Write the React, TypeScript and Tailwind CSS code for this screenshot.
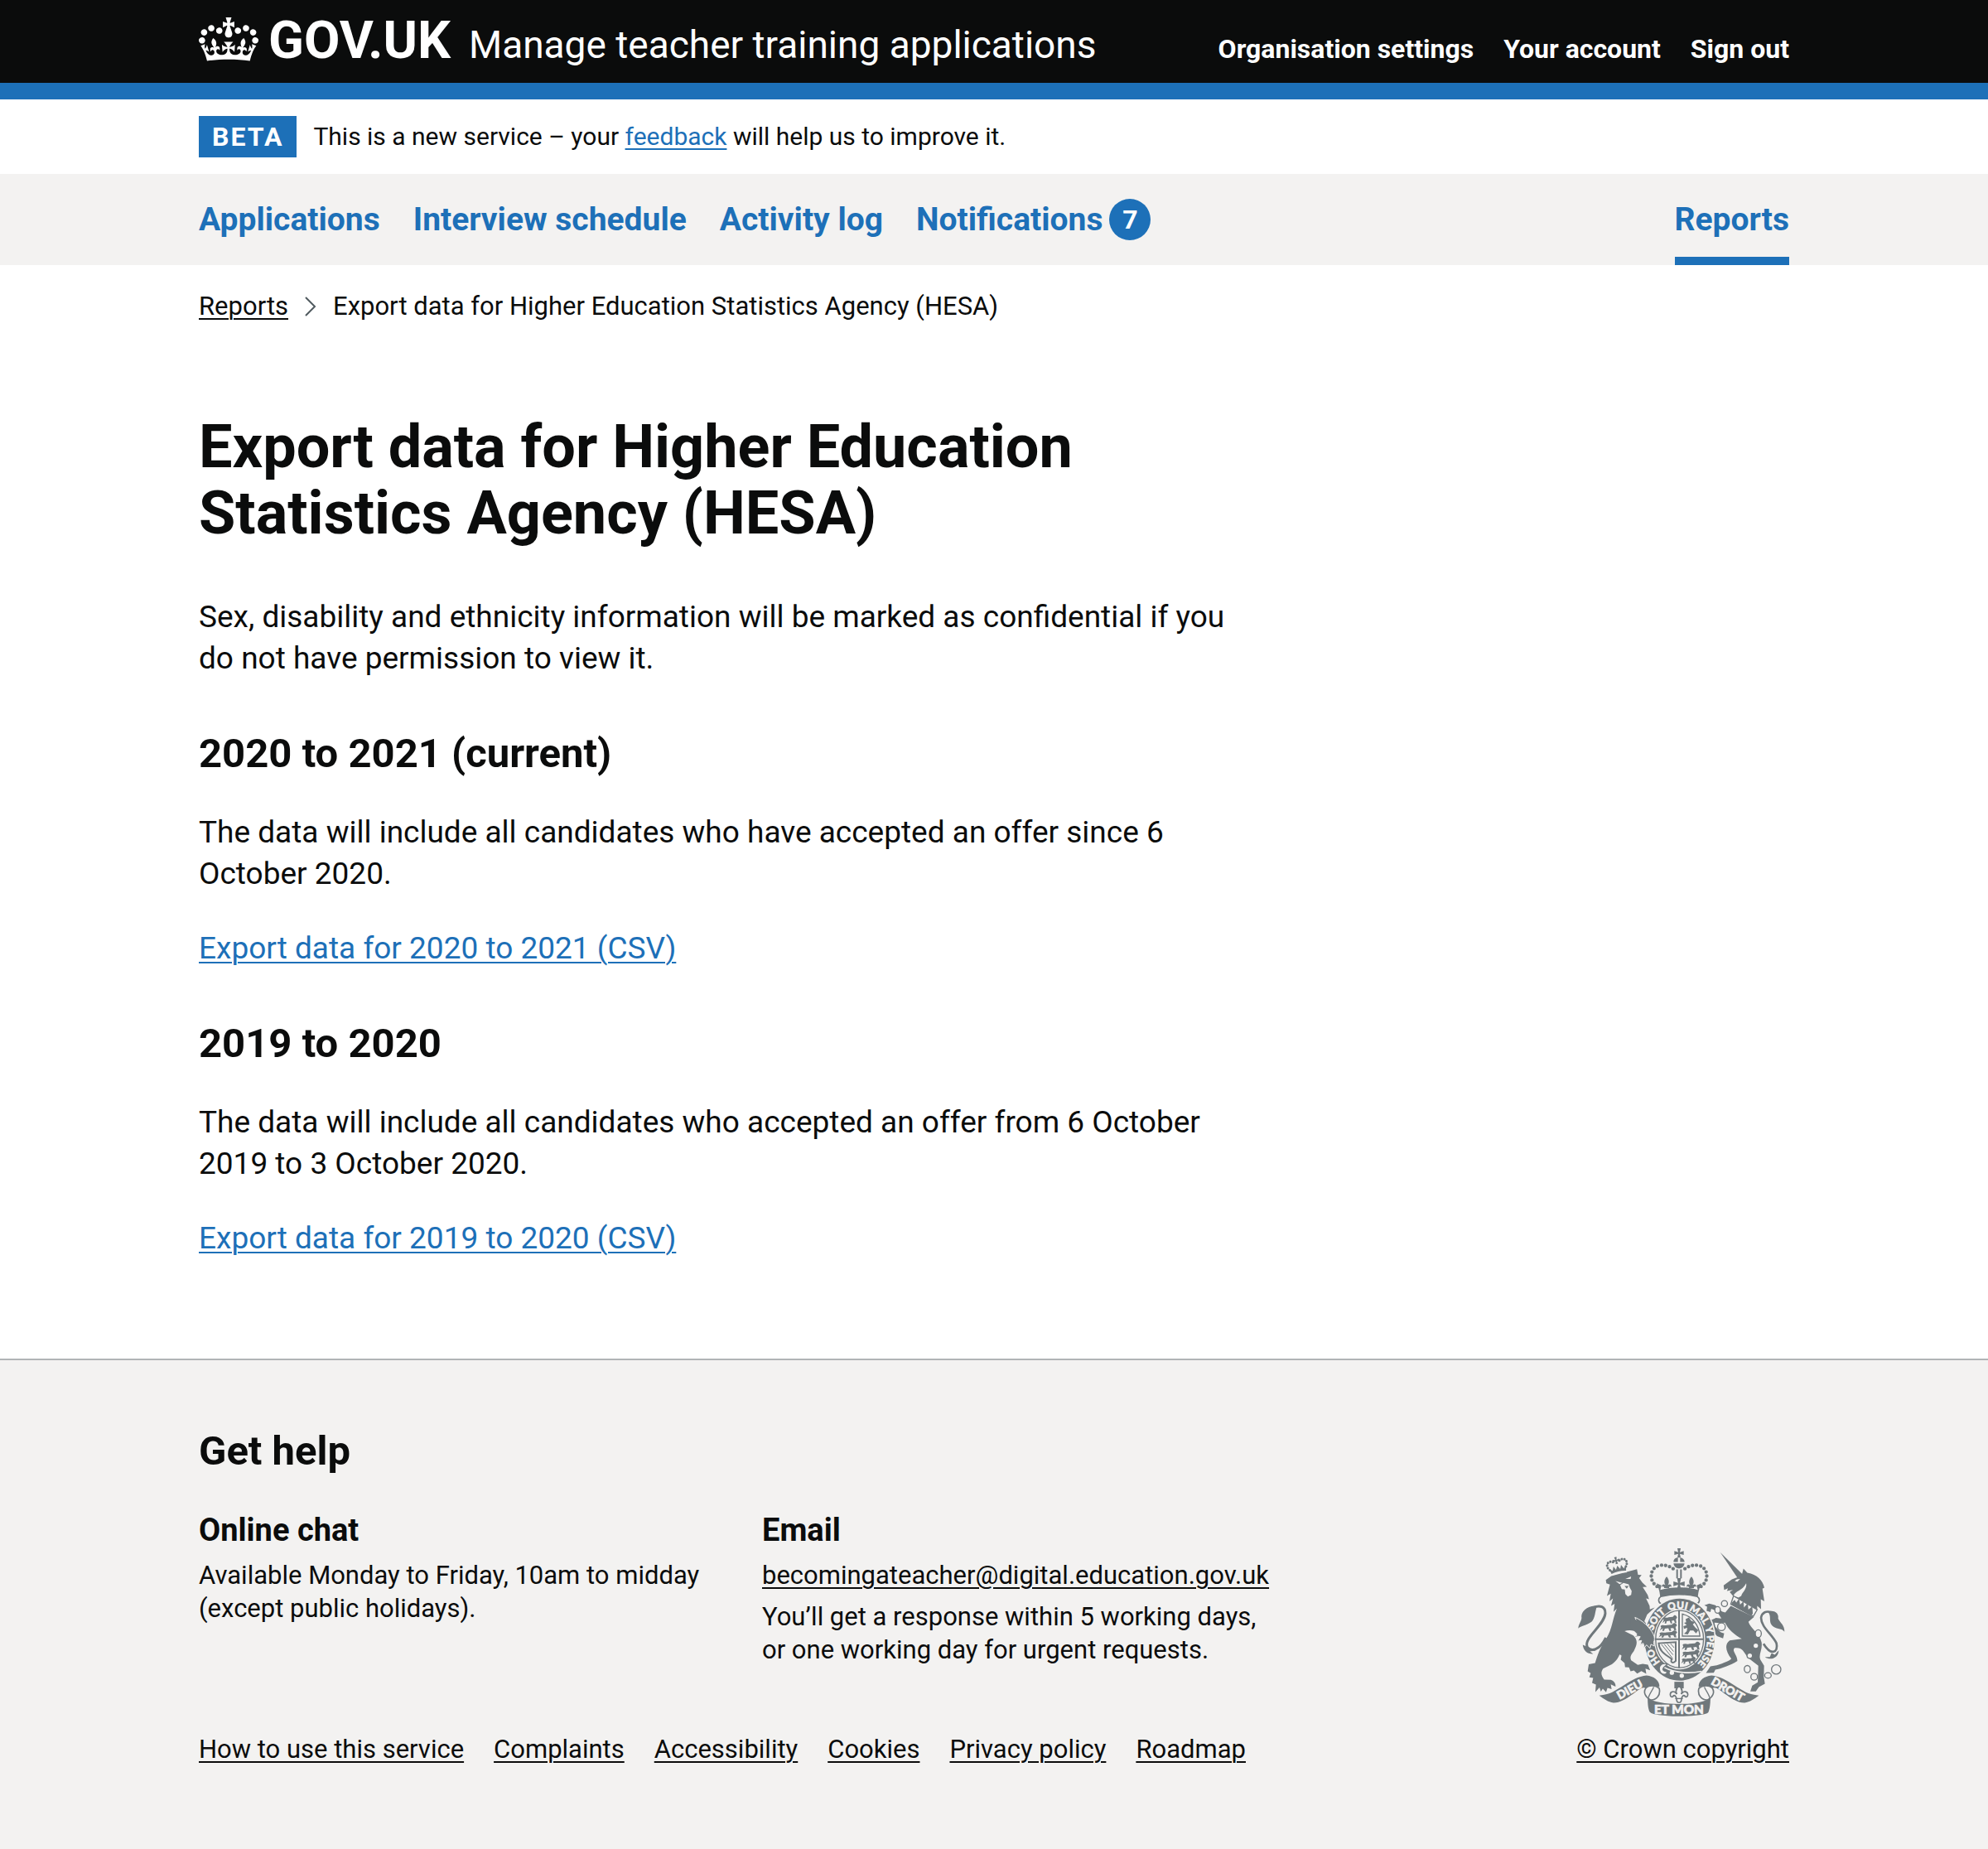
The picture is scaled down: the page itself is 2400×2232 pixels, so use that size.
import React from "react";

const INK = "#6f777b";
const PAPER = "#f3f2f1";

function Crown() {
  return (
    <svg aria-hidden="true" viewBox="0 0 132 97" className="h-[53px] w-[72px] shrink-0" fill="currentColor">
      <path
        fillRule="evenodd"
        d="M25 30.2c3.5 1.5 7.7-.2 9.1-3.7 1.5-3.6-.2-7.8-3.9-9.2-3.6-1.4-7.6.3-9.1 3.9-1.4 3.5.3 7.5 3.9 9zM9 39.5c3.6 1.5 7.8-.2 9.2-3.7 1.5-3.6-.2-7.8-3.9-9.1-3.6-1.5-7.6.2-9.1 3.8-1.4 3.5.3 7.5 3.8 9zM4.4 57.2c3.5 1.5 7.7-.2 9.1-3.8 1.5-3.6-.2-7.7-3.9-9.1-3.5-1.5-7.6.3-9.1 3.8-1.4 3.5.3 7.6 3.9 9.1zm38.3-21.4c3.5 1.5 7.7-.2 9.1-3.8 1.5-3.6-.2-7.7-3.9-9.1-3.6-1.5-7.6.3-9.1 3.8-1.3 3.6.4 7.7 3.9 9.1zm64.4-5.6c-3.6 1.5-7.8-.2-9.1-3.7-1.5-3.6.2-7.8 3.8-9.2 3.6-1.4 7.7.3 9.2 3.9 1.3 3.5-.4 7.5-3.9 9zm15.9 9.3c-3.6 1.5-7.7-.2-9.1-3.7-1.5-3.6.2-7.8 3.7-9.1 3.6-1.5 7.7.2 9.2 3.8 1.5 3.5-.3 7.5-3.8 9zm4.7 17.7c-3.6 1.5-7.8-.2-9.2-3.8-1.5-3.6.2-7.7 3.9-9.1 3.6-1.5 7.7.3 9.2 3.8 1.3 3.5-.4 7.6-3.9 9.1zM89.3 35.8c-3.6 1.5-7.8-.2-9.2-3.8-1.4-3.6.2-7.7 3.9-9.1 3.6-1.5 7.7.3 9.2 3.8 1.4 3.6-.3 7.7-3.9 9.1zM69.7 17.7l8.9 4.7V9.3l-8.9 2.8c-.2-.3-.5-.6-.9-.9L72.4 0H59.6l3.5 11.2c-.3.3-.6.5-.9.9l-8.8-2.8v13.1l8.8-4.7c.3.3.6.7.9.9l-5 15.4v.1c-.2.8-.4 1.6-.4 2.4 0 4.1 3.1 7.5 7 8.1h.2c.3 0 .7.1 1 .1.4 0 .7 0 1-.1h.2c4-.6 7.1-4.1 7.1-8.1 0-.8-.1-1.7-.4-2.4V34l-5.1-15.4c.4-.2.7-.6 1-.9zM66 92.8c16.9 0 32.8 1.1 47.1 3.2 4-16.9 8.9-26.7 14-33.5l-9.6-3.4c1 4.9 1.1 7.2 0 10.2-1.5-1.4-3-4.3-4.2-8.7L108.6 76c2.8-2 5-3.2 7.5-3.3-4.4 9.4-10 11.9-13.6 11.2-4.3-.8-6.3-4.6-5.6-7.9 1-4.7 5.7-5.9 8-.5 4.3-8.7-3-11.4-7.6-8.8 7.1-7.2 7.9-13.5 2.1-21.1-8 6.1-8.1 12.3-4.5 20.8-4.7-5.4-12.1-2.5-9.5 6.2 3.4-5.2 7.9-2 7.2 3.1-.6 4.3-6.4 7.8-13.5 7.2-10.3-.9-10.9-8-11.2-13.8 2.5-.5 7.1 1.8 11 7.3L80.2 60c-4.1 4.4-8 5.3-12.3 5.4 1.4-4.4 8-11.6 8-11.6H55.5s6.4 7.2 7.9 11.6c-4.2-.1-8-1-12.3-5.4l1.4 16.4c3.9-5.5 8.5-7.7 10.9-7.3-.3 5.8-.9 12.8-11.1 13.8-7.2.6-12.9-2.9-13.5-7.2-.7-5 3.8-8.3 7.1-3.1 2.7-8.7-4.6-11.6-9.4-6.2 3.7-8.5 3.6-14.7-4.6-20.8-5.8 7.6-5 13.9 2.2 21.1-4.7-2.6-11.9.1-7.7 8.8 2.3-5.5 7.1-4.2 8.1.5.7 3.3-1.3 7.1-5.7 7.9-3.5.7-9-1.8-13.5-11.2 2.5.1 4.7 1.3 7.5 3.3l-4.7-15.4c-1.2 4.4-2.7 7.2-4.3 8.7-1.1-3-.9-5.3 0-10.2l-9.5 3.4c5 6.9 9.9 16.7 14 33.5 14.8-2.1 30.8-3.2 47.7-3.2z"
      />
    </svg>
  );
}

const CROSS = "M-6 -17H6L3 -3L17 -7V7L3 3L6 17H-6L-3 3L-17 7V-7L-3 -3Z";
const FLEUR = "M0 -20C9 -10 9 0 4 8C10 2 18 6 15 14C11 10 8 14 8 18H-8C-8 14 -11 10 -15 14C-18 6 -10 2 -4 8C-9 0 -9 -10 0 -20Z";
const PASSANT = "M0 12L4 4L2 0C8 -6 14 0 20 -3L34 -4C40 -12 46 -8 48 -2L44 2L46 12H41L38 5L30 6L32 13H27L24 6L14 7L12 13H7L9 6Z";

function Crest() {
  return (
    <svg aria-hidden="true" viewBox="66 50 762 620" className="h-[206px] w-[254px]" fill={INK}>
      {/* lion */}
      <path d="M172 168L192 154L285 129L289 149L302 150L293 161L305 178L321 193L306 194L324 222L329 238L318 235L331 262L332 275L350 268L322 294L312 318L344 362L352 392L340 409L330 402L328 415L316 407L310 414L309 400L298 404L303 388L288 391L297 374L279 374L290 362C275 350 255 349 240 354L272 370C292 390 283 408 274 426C264 440 258 447 264 460L288 477L306 473L325 476L333 496L316 490L319 509L301 499L286 508L274 497L262 500L256 486L242 485L240 470L226 458L229 443L219 437L228 405C228 440 212 462 194 474L162 490C152 505 156 516 166 530L190 531C202 535 209 545 207 556L190 547L193 565L178 560L173 576L161 563L154 574L149 559L134 575L136 548L122 542L126 524L112 522L117 507L106 500L110 474L133 470C142 440 150 415 174 380C196 345 196 310 212 272L200 284L204 255L191 262L198 235L185 246L190 218L176 226L187 185L174 180Z" />
      <path d="M207 172L232 179L222 183ZM243 164L264 155L262 164Z" fill={PAPER} />
      <path d="M224 187L236 179L255 184L259 196L266 208L264 222L252 228L243 219L241 203L230 201Z" fill={PAPER} />
      <path d="M240 190L255 190L248 200Z" />
      <path d="M172 378C150 425 118 430 105 412C88 380 165 335 170 290C171 265 150 258 128 268" fill="none" stroke={INK} strokeWidth="9" />
      <path d="M140 262C112 260 80 278 84 306C82 322 72 330 72 344C82 334 100 334 120 320C134 306 132 284 140 262ZM88 404C92 428 105 438 126 437L114 428L136 425Z" />
      {/* lion's crown */}
      <g transform="translate(214 118) rotate(-13)">
        <path d="M-30 8C-48 -14 -24 -32 -7 -14M30 8C48 -14 24 -32 7 -14" fill="none" stroke={INK} strokeWidth="9" strokeLinecap="round" strokeDasharray="0 10" />
        <path d="M-32 2L-27 23Q0 16 27 23L32 2L21 13L14 -2L8 12L0 -2L-8 12L-14 -2L-21 13Z" />
        <path d="M-28 28Q0 21 28 28" fill="none" stroke={PAPER} strokeWidth="4" />
        <path d={CROSS} transform="translate(0 -21) scale(.75)" />
      </g>
      {/* royal crown */}
      <path d={CROSS} transform="translate(438 70)" />
      <path d="M418 103C418 92 426 87 434 87V103ZM442 87C452 88 458 94 458 103H442ZM418 108H458C456 120 448 126 438 126C428 126 420 120 418 108Z" />
      <path d="M428 130H434V162H428ZM442 130H448V162H442Z" />
      <path d="M358 192C326 170 332 122 368 115C398 112 414 124 424 134M518 192C550 170 544 122 508 115C478 112 462 124 452 134" fill="none" stroke={INK} strokeWidth="13" strokeLinecap="round" strokeDasharray="0 15" />
      <path d="M356 180L374 188L370 204C410 192 466 192 506 204L502 188L520 180C510 200 508 215 506 232C460 222 416 222 370 232C368 215 366 200 356 180Z" />
      <path d={FLEUR} transform="translate(393 178) scale(1.1)" />
      <path d={FLEUR} transform="translate(483 178) scale(1.1)" />
      <path d={CROSS} transform="translate(438 182) scale(1.2)" />
      <path d="M372 228C416 218 460 218 504 228C516 236 514 252 500 256C456 244 420 244 376 256C362 252 360 236 372 228Z" fill={PAPER} stroke={INK} strokeWidth="5" />
      {/* unicorn */}
      <path d="M588 68L669 148L650 160Z" />
      <path d="M650 158L667 146L672 127L686 142C722 148 742 170 748 196L741 200L748 246L735 238L736 274L722 262L722 275L634 226L622 212L634 204L612 208L616 198L602 204L600 188L630 166Z" />
      <path d="M636 226C642 206 668 208 682 180C686 200 668 212 664 226L654 232ZM648 166L660 164L650 174L640 172Z" fill={PAPER} />
      <path d="M636 226L722 276L708 300L626 256Z" fill={PAPER} stroke={INK} strokeWidth="4" />
      <path d="M630 250L640 240L646 250L656 236L660 258L672 246L674 268L688 252L690 276L704 264L706 290L700 298L628 258Z" />
      <path d="M626 262L710 303L690 320C698 345 730 360 738 395C742 425 724 440 735 460L747 480L746 520L750 545L728 557L717 573L697 573L704 552L724 540L726 480L688 450C670 425 668 412 640 415C628 425 650 440 650 462C626 478 590 490 570 494L564 505L536 506L552 482L575 478C600 470 625 460 628 454C608 430 602 402 622 388L666 382C640 368 618 350 604 322L580 325L566 322L570 338L588 358L602 362L598 380L576 372L553 345L548 318L572 306L592 308L582 292L568 278L555 273L552 285L538 280L540 265L530 260L548 254L570 260L590 282L606 286Z" />
      <path d="M612 298L592 290L568 267L542 262M606 318L580 316L558 318L562 340L588 366" fill="none" stroke={INK} strokeWidth="12" strokeLinejoin="round" />
      <path d="M745 400C772 445 800 432 792 398C776 365 736 340 736 305C740 285 756 280 772 285" fill="none" stroke={INK} strokeWidth="8" />
      <path d="M760 284C786 274 802 292 798 308C806 325 822 332 821 356C808 342 790 348 776 334C762 318 776 298 760 284ZM750 448C770 462 800 452 800 424L786 440L774 434L768 448Z" />
      <g fill={PAPER} stroke={INK} strokeWidth="4">
        <circle cx="603" cy="254" r="11" />
        <ellipse cx="578" cy="277" rx="10" ry="12" />
        <circle cx="592" cy="338" r="14" />
        <ellipse cx="726" cy="363" rx="11" ry="14" />
        <circle cx="717" cy="407" r="10" />
        <circle cx="695" cy="443" r="10" />
        <ellipse cx="686" cy="492" rx="11" ry="13" />
        <circle cx="711" cy="520" r="12" />
        <ellipse cx="761" cy="515" rx="12" ry="10" />
        <circle cx="791" cy="493" r="17" />
      </g>
      {/* garter */}
      <ellipse cx="440" cy="385" rx="132" ry="154" fill={PAPER} />
      <ellipse cx="440" cy="385" rx="127" ry="149" />
      <ellipse cx="440" cy="383" rx="93" ry="110" fill={PAPER} />
      <ellipse cx="440" cy="383" rx="87" ry="104" fill="none" stroke={INK} strokeWidth="4" />
      <path id="garter-line" d="M440 498A100 113 0 0 1 440 272A100 113 0 0 1 440 498" fill="none" />
      <g fill={PAPER} stroke={PAPER} strokeWidth="1.5" fontFamily="Lato, sans-serif" fontWeight="900" fontSize="36" textAnchor="middle">
        <text><textPath href="#garter-line" startOffset="16%">HO</textPath></text>
        <text><textPath href="#garter-line" startOffset="36%">SOIT</textPath></text>
        <text><textPath href="#garter-line" startOffset="49%">QUI</textPath></text>
        <text><textPath href="#garter-line" startOffset="61%">MAL</textPath></text>
        <text><textPath href="#garter-line" startOffset="70%">Y</textPath></text>
        <text><textPath href="#garter-line" startOffset="81%">PENSE</textPath></text>
      </g>
      <path d="M372 478C400 500 460 512 520 500" fill="none" stroke={PAPER} strokeWidth="5" />
      <path d="M396 474C372 466 358 486 372 506C384 516 396 510 394 500C382 502 376 494 382 486Z" fill={PAPER} stroke={INK} strokeWidth="4" />
      <circle cx="412" cy="505" r="8" fill={PAPER} />
      <circle cx="448" cy="516" r="8" fill={PAPER} />
      {/* lion's forepaw resting on the garter */}
      <path d="M278 304C306 316 330 338 344 364C350 376 350 386 346 394L348 408L336 402L332 416L320 404L312 414L308 398L297 402L302 388L288 390L297 374L282 372L290 340Z" stroke={PAPER} strokeWidth="3" />
      <path d="M262 300L300 326L300 366L284 362L262 340Z" />
      {/* quartered shield */}
      <path d="M435 278H441V380H528V386H441V488H435V386H350V380H435Z" />
      <path d={PASSANT} transform="translate(378 308) scale(1.1 1.4)" />
      <path d={PASSANT} transform="translate(368 336) scale(1.3 1.3)" />
      <path d={PASSANT} transform="translate(364 362) scale(1.4 1.2)" />
      <path d={PASSANT} transform="translate(448 404) scale(1.4 1.4)" />
      <path d={PASSANT} transform="translate(448 432) scale(1.35 1.3)" />
      <path d={PASSANT} transform="translate(446 457) scale(1.1 1.2)" />
      <path d="M450 292C485 300 510 330 514 372H450Z" fill="none" stroke={INK} strokeWidth="4" />
      <path d="M462 310L474 304L482 316L496 322L488 330L498 342L508 350L500 362L490 352L478 352L470 366L456 364L466 354L468 342L456 346L454 336L466 332L456 324L464 322Z" />
      <path d="M364 398L426 394V462C416 474 404 466 412 456C392 440 366 430 364 398Z" fill="none" stroke={INK} strokeWidth="6" />
      <path d="M374 402L414 452M384 401L416 440M395 400L418 428M407 399L420 414" fill="none" stroke={INK} strokeWidth="3" />
      {/* pendant */}
      <path d="M421 538H455V562H421Z" />
      <path d="M438 553C451 563 451 573 446 583C454 569 470 572 470 585C470 594 460 596 458 588C452 586 448 594 447 600C447 618 429 618 429 600C428 594 424 586 418 588C416 596 406 594 406 585C406 572 422 569 430 583C425 573 425 563 438 553Z" fill={PAPER} stroke={INK} strokeWidth="5" />
      <path d="M424 599H452" stroke={INK} strokeWidth="4" />
      {/* motto scroll */}
      <path d="M148 588L166 585C215 578 262 520 320 515C352 518 370 540 366 558C350 550 330 552 316 562C300 545 250 615 200 614C180 612 165 600 148 588Z" />
      <path d="M728 588L710 585C661 578 614 520 556 515C524 518 506 540 510 558C526 550 546 552 560 562C576 545 626 615 676 614C696 612 711 600 728 588Z" />
      <path d="M318 560C306 576 316 594 334 604C356 606 372 586 366 562C352 550 330 550 318 560ZM558 560C570 576 560 594 542 604C520 606 504 586 510 562C524 550 546 550 558 560Z" fill={PAPER} stroke={INK} strokeWidth="5" />
      <path d="M346 557C340 572 328 584 326 600M530 557C536 572 548 584 550 600" fill="none" stroke={INK} strokeWidth="4" />
      <path d="M324 596C360 626 516 626 552 596C552 620 549 640 544 650C526 668 350 668 332 648C326 638 324 620 324 596Z" />
      <g fill={PAPER} stroke={PAPER} strokeWidth="2" fontFamily="Lato, sans-serif" fontWeight="900" fontSize="42" textAnchor="middle">
        <text transform="translate(266 579) rotate(-29)">DIEU</text>
        <text transform="translate(608 578) rotate(30)">DROIT</text>
        <text x="438" y="655" fontSize="46">ET MON</text>
      </g>
    </svg>
  );
}

const headerLinks = ["Organisation settings", "Your account", "Sign out"];
const footerLinks = ["How to use this service", "Complaints", "Accessibility", "Cookies", "Privacy policy", "Roadmap"];
const container = "mx-auto w-full max-w-[1920px]";
const underlined = "underline decoration-2 underline-offset-4";

function ExportSection({ title, text, link }: { title: string; text: string; link: string }) {
  return (
    <section className="mt-[60px]">
      <h2 className="mb-10 text-[49px] leading-[60px] font-bold">{title}</h2>
      <p className="mb-10">{text}</p>
      <p>
        <a href="#" className={`${underlined} text-[#1d70b8]`}>{link}</a>
      </p>
    </section>
  );
}

export default function App() {
  return (
    <div className="flex min-h-screen flex-col bg-white font-[Roboto,sans-serif] text-[31px] leading-10 text-[#0b0c0c]">
      <header className="bg-[#0b0c0c] text-white">
        <div className={`${container} flex h-[100px] items-baseline justify-between pt-[14px]`}>
          <div className="flex items-baseline">
            <a href="#" className="flex items-baseline gap-3 text-[63px] leading-[70px] font-bold">
              <span className="self-start pt-[7px]"><Crown /></span>
              GOV.UK
            </a>
            <a href="#" className="ml-[22px] text-[46px] leading-[50px]">Manage teacher training applications</a>
          </div>
          <nav aria-label="Account">
            <ul className="flex gap-9 text-[32px] font-bold">
              {headerLinks.map((l) => (
                <li key={l}><a href="#">{l}</a></li>
              ))}
            </ul>
          </nav>
        </div>
        <div className="h-5 bg-[#1d70b8]" />
      </header>

      <div className={`${container} flex items-center gap-5 py-5`}>
        <strong className="bg-[#1d70b8] px-4 text-[32px] leading-[50px] font-bold tracking-[2px] text-white">BETA</strong>
        <p className="text-[30px]">
          This is a new service – your <a href="#" className={`${underlined} text-[#1d70b8]`}>feedback</a> will help us to improve it.
        </p>
      </div>

      <nav aria-label="Primary" className="bg-[#f3f2f1]">
        <ul className={`${container} flex h-[110px] gap-10 text-[39px] leading-[50px] font-bold text-[#1d70b8]`}>
          <li className="pt-[30px]"><a href="#">Applications</a></li>
          <li className="pt-[30px]"><a href="#">Interview schedule</a></li>
          <li className="pt-[30px]"><a href="#">Activity log</a></li>
          <li className="pt-[30px]">
            <a href="#" className="flex items-center gap-2">
              Notifications
              <span className="flex size-[50px] items-center justify-center rounded-full bg-[#1d70b8] text-[32px] text-white">7</span>
            </a>
          </li>
          <li className="ml-auto border-b-[10px] border-[#1d70b8] pt-[30px]"><a href="#" aria-current="page">Reports</a></li>
        </ul>
      </nav>

      <div className={container}>
        <nav aria-label="Breadcrumb" className="pt-[30px]">
          <ol className="flex items-center">
            <li><a href="#" className={underlined}>Reports</a></li>
            <li className="flex items-center">
              <svg aria-hidden="true" viewBox="0 0 14 24" className="mr-5 ml-5 h-6 w-[14px]" fill="none" stroke="#505a5f" strokeWidth="2">
                <path d="M1 1L12 12L1 23" />
              </svg>
              Export data for Higher Education Statistics Agency (HESA)
            </li>
          </ol>
        </nav>
        <main className="w-2/3 pt-[110px] pr-[30px] pb-[120px] text-[37px] leading-[50px]">
          <h1 className="mb-[60px] text-[72px] leading-20 font-bold">Export data for Higher Education Statistics Agency (HESA)</h1>
          <p>Sex, disability and ethnicity information will be marked as confidential if you do not have permission to view it.</p>
          <ExportSection
            title="2020 to 2021 (current)"
            text="The data will include all candidates who have accepted an offer since 6 October 2020."
            link="Export data for 2020 to 2021 (CSV)"
          />
          <ExportSection
            title="2019 to 2020"
            text="The data will include all candidates who accepted an offer from 6 October 2019 to 3 October 2020."
            link="Export data for 2019 to 2020 (CSV)"
          />
        </main>
      </div>

      <footer className="grow border-t-2 border-[#b1b4b6] bg-[#f3f2f1] pt-20">
        <div className={`${container} flex items-end justify-between`}>
          <div>
            <h2 className="mb-10 text-[49px] leading-[60px] font-bold">Get help</h2>
            <div className="mb-20 flex gap-[60px]">
              <section className="w-[620px]">
                <h3 className="mb-[10px] text-[38px] leading-[50px] font-bold">Online chat</h3>
                <p>Available Monday to Friday, 10am to midday<br />(except public holidays).</p>
              </section>
              <section>
                <h3 className="mb-[10px] text-[38px] leading-[50px] font-bold">Email</h3>
                <p className="mb-[10px]">
                  <a href="#" className={underlined}>becomingateacher@digital.education.gov.uk</a>
                </p>
                <p>You’ll get a response within 5 working days,<br />or one working day for urgent requests.</p>
              </section>
            </div>
            <ul className="flex gap-9">
              {footerLinks.map((l) => (
                <li key={l}><a href="#" className={underlined}>{l}</a></li>
              ))}
            </ul>
          </div>
          <a href="#" className={`${underlined} flex flex-col items-start gap-[18px]`}>
            <Crest />
            <span>© Crown copyright</span>
          </a>
        </div>
      </footer>
    </div>
  );
}
